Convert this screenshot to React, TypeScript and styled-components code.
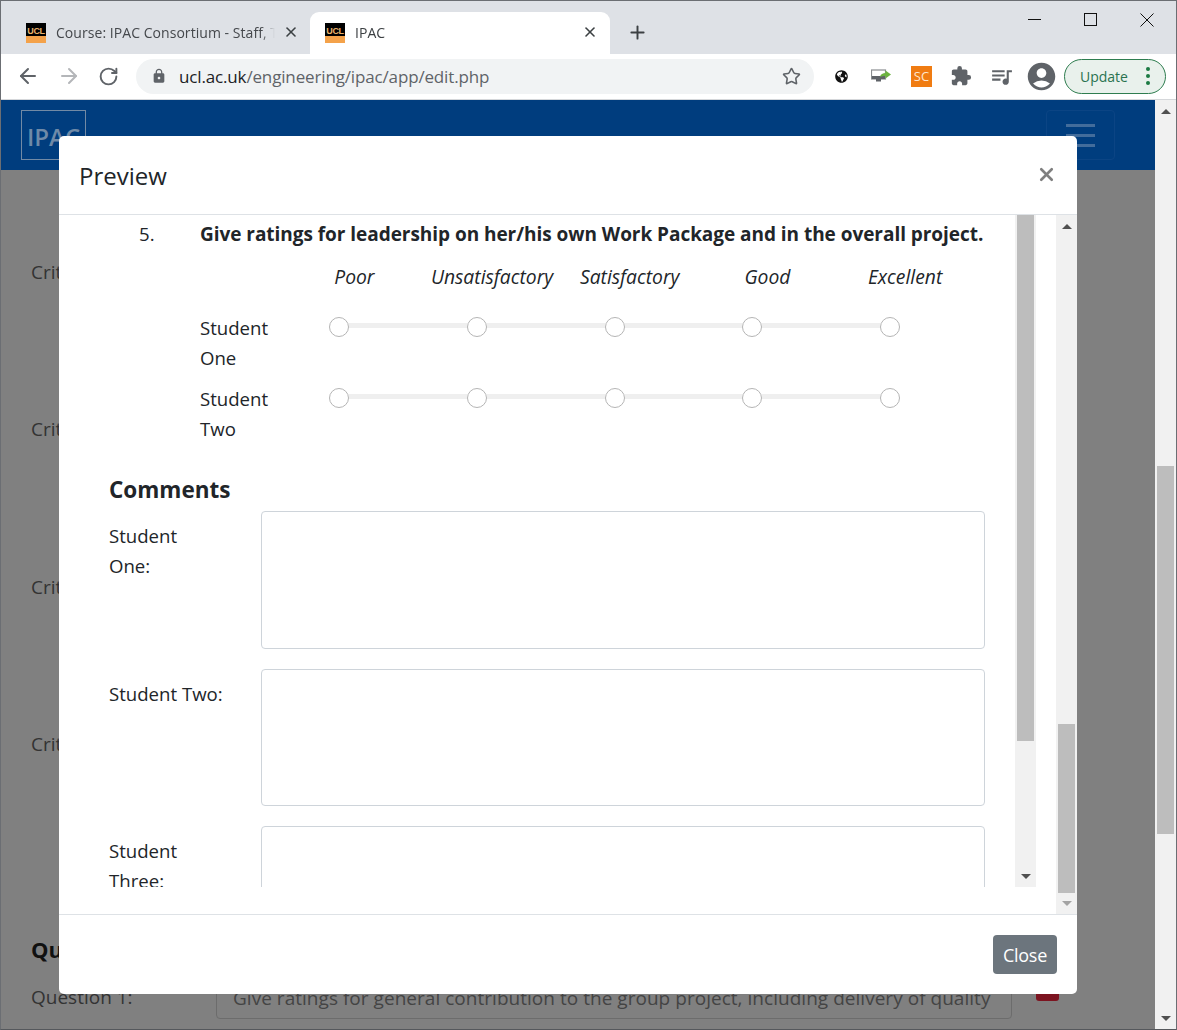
import { Fragment } from "react";
import styled, { createGlobalStyle } from "styled-components";
import { ArrowLeft, ArrowRight, RotateCw, Star, X, Plus } from "lucide-react";
import { FaGlobeAmericas } from "react-icons/fa";
import { MdExtension, MdQueueMusic, MdAccountCircle, MdLock } from "react-icons/md";

const GlobalStyle = createGlobalStyle`
  html, body {
    margin: 0;
    padding: 0;
    overflow: hidden;
    background: #808080;
  }
  * {
    box-sizing: border-box;
  }
`;

const BODY_FONT = `"Open Sans", "Noto Sans", sans-serif`;

const Window = styled.div`
  display: flex;
  flex-direction: column;
  width: 1177px;
  height: 1030px;
  border: 1px solid #6b6e73;
  border-bottom-color: #55585c;
  overflow: hidden;
  font-family: ${BODY_FONT};
  color: #212529;
`;

/* browser chrome */
const TabStrip = styled.div`
  display: flex;
  flex: none;
  height: 53px;
  padding: 11px 0 0 9px;
  background: #dee1e6;
  align-items: stretch;
`;

const Tab = styled.div<{ $active?: boolean }>`
  display: flex;
  align-items: center;
  width: 300px;
  padding: 0 ${props => (props.$active ? "12px" : "11px")} 2px ${props => (props.$active ? "15px" : "16px")};
  border-radius: 9px 9px 0 0;
  background: ${props => (props.$active ? "#ffffff" : "transparent")};
  color: ${props => (props.$active ? "#3c4043" : "#45484c")};
  font-size: 14px;
  letter-spacing: 0.05px;
`;

const Favicon = styled.div`
  display: flex;
  flex: none;
  flex-direction: column;
  width: 20px;
  height: 20px;
  margin: 2px 10px 0 0;
  background: #f4a24a;
`;

const FaviconTop = styled.div`
  height: 13px;
  padding-top: 4px;
  background: #000000;
  color: #e9b36d;
  font: bold 9px/9px "Liberation Sans", sans-serif;
  text-align: center;
  letter-spacing: -0.4px;
`;

const TabTitle = styled.span`
  flex: 1;
  margin-right: 8px;
  white-space: nowrap;
  overflow: hidden;
  mask-image: linear-gradient(to right, #000 calc(100% - 14px), transparent);
`;

const NewTab = styled.div`
  display: flex;
  align-items: center;
  margin-left: 17px;
  padding-bottom: 2px;
  color: #3c4043;
`;

const WindowControls = styled.div`
  display: flex;
  margin-left: auto;
  margin-top: -11px;
  height: 37px;
  padding-right: 22px;
  gap: 43px;
  align-items: center;
`;

const Toolbar = styled.div`
  display: flex;
  flex: none;
  align-items: center;
  height: 46px;
  padding: 0 0 1px 15px;
  background: #ffffff;
  border-bottom: 1px solid #d5d7da;
`;

const NavIcons = styled.div`
  display: flex;
  flex: none;
  align-items: center;
  gap: 17px;
  width: 120px;
`;

const UrlBar = styled.div`
  display: flex;
  flex: none;
  align-items: center;
  width: 678px;
  height: 35px;
  padding: 0 13px 0 15px;
  border-radius: 18px;
  background: #f1f3f4;
  font-size: 17px;
  letter-spacing: -0.15px;
  color: #5f6368;
`;

const UrlHost = styled.span`
  margin-left: 12px;
  color: #202124;
`;

const UrlStar = styled.div`
  display: flex;
  margin-left: auto;
`;

const ExtensionIcons = styled.div`
  display: flex;
  flex: none;
  align-items: center;
  margin-left: 12px;
`;

const ExtSlot = styled.div<{ $w: number }>`
  display: flex;
  flex: none;
  align-items: center;
  justify-content: center;
  width: ${props => props.$w}px;
`;

const ScBadge = styled.div`
  width: 21px;
  height: 21px;
  background: #f07c12;
  color: #ffe7cf;
  font-size: 13px;
  line-height: 21px;
  text-align: center;
`;

const UpdatePill = styled.div`
  display: flex;
  flex: none;
  align-items: center;
  justify-content: space-between;
  width: 102px;
  height: 35px;
  padding: 0 15px 0 15px;
  border: 1.5px solid #2e7d4f;
  border-radius: 18px;
  background: #e9f1ec;
  color: #2a7350;
  font-size: 14px;
`;

const PillDots = styled.div`
  display: flex;
  flex-direction: column;
  gap: 3px;
`;

const PillDot = styled.span`
  width: 4px;
  height: 4px;
  border-radius: 50%;
  background: #1b7a43;
`;

/* page behind the dialog */
const Viewport = styled.div`
  position: relative;
  display: flex;
  flex: 1;
  min-height: 0;
`;

const Page = styled.div`
  flex: 1;
  min-width: 0;
  background: #808080;
  overflow: hidden;
`;

const Navbar = styled.div`
  display: flex;
  align-items: center;
  justify-content: space-between;
  height: 70px;
  padding: 0 40px 0 20px;
  background: #003d7e;
`;

const Brand = styled.div`
  width: 65px;
  height: 50px;
  border: 1px solid #728aa5;
  color: #6f8aa8;
  font-size: 24px;
  font-weight: 600;
  line-height: 52px;
  padding-left: 5px;
`;

const Hamburger = styled.div`
  display: flex;
  flex-direction: column;
  align-items: center;
  justify-content: center;
  gap: 7px;
  width: 69px;
  height: 50px;
  border: 1px solid #0b4484;
  border-radius: 4px;
`;

const HamburgerLine = styled.span`
  width: 29px;
  height: 3px;
  background: #426c9b;
`;

const PageContent = styled.div`
  padding: 87px 0 0 30px;
  font-size: 19px;
  line-height: 30px;
  color: #333333;
`;

const CritRow = styled.div`
  height: 157.3px;
`;

const SectionHead = styled.div`
  margin-top: 45px;
  height: 36px;
  font-size: 22px;
  font-weight: 700;
  line-height: 36px;
  color: #111111;
`;

const QuestionRow = styled.div`
  display: flex;
  align-items: center;
  margin-top: 8px;
`;

const QuestionLabel = styled.div`
  width: 185px;
`;

const QuestionInput = styled.div`
  width: 796px;
  height: 44px;
  padding-left: 16px;
  border: 1px solid #6c6c6c;
  border-radius: 4px;
  white-space: nowrap;
  overflow: hidden;
  line-height: 44px;
  letter-spacing: 0.03px;
  color: #444444;
`;

const RemoveButton = styled.div`
  width: 23px;
  height: 16px;
  margin: 0 0 8px 24px;
  border-radius: 3px;
  background: #7c1420;
`;

/* scrollbars */
const Scrollbar = styled.div`
  display: flex;
  flex: none;
  flex-direction: column;
  align-items: center;
  width: 21px;
  background: #f1f1f1;
`;

const Arrow = styled.div<{ $down?: boolean; $muted?: boolean }>`
  flex: none;
  width: 0;
  height: 0;
  border-left: 5px solid transparent;
  border-right: 5px solid transparent;
  ${props => (props.$down ? "border-top" : "border-bottom")}: 5px solid ${props => (props.$muted ? "#a3a3a3" : "#505050")};
`;

const ArrowBox = styled.div<{ $up?: boolean }>`
  display: flex;
  flex: none;
  align-items: center;
  justify-content: center;
  width: 100%;
  height: 21px;
  padding-top: ${props => (props.$up ? "2px" : "0")};
`;

const Thumb = styled.div<{ $top: number; $height: number }>`
  flex: none;
  width: 17px;
  height: ${props => props.$height}px;
  margin-top: ${props => props.$top}px;
  background: #bdbdbd;
`;

const Spacer = styled.div`
  flex: 1;
`;

/* dialog */
const Modal = styled.div`
  position: absolute;
  top: 36px;
  left: 58px;
  display: flex;
  flex-direction: column;
  width: 1018px;
  height: 858px;
  border-radius: 5px;
  background: #ffffff;
  overflow: hidden;
`;

const ModalHeader = styled.div`
  display: flex;
  flex: none;
  align-items: center;
  justify-content: space-between;
  height: 79px;
  padding: 0 20px;
  border-bottom: 1px solid #dee2e6;
`;

const ModalTitle = styled.div`
  font-size: 24px;
  font-weight: 500;
`;

const CloseCross = styled.div`
  display: flex;
  margin-top: -2px;
  color: #7f7f7f;
`;

const ModalBody = styled.div`
  display: flex;
  flex: 1;
  min-height: 0;
`;

const ModalMain = styled.div`
  flex: 1;
  min-width: 0;
  padding-bottom: 27px;
`;

const InnerFrame = styled.div`
  display: flex;
  width: 977px;
  height: 100%;
`;

const InnerContent = styled.div`
  flex: 1;
  min-width: 0;
  overflow: hidden;
  font-size: 18.6px;
  line-height: 30px;
`;

const QuestionLine = styled.div`
  display: flex;
  height: 30px;
  margin: 4px 0 0 80px;
`;

const QuestionNumber = styled.div`
  width: 61px;
`;

const QuestionText = styled.div`
  font-size: 19px;
  font-weight: 700;
  white-space: nowrap;
  letter-spacing: -0.04px;
`;

const RatingScale = styled.div`
  display: grid;
  grid-template-columns: repeat(5, 137.7px);
  height: 30px;
  margin: 13px 0 21px 226.5px;
`;

const RatingLabel = styled.div`
  font-size: 19.3px;
  font-style: italic;
  text-align: center;
  white-space: nowrap;
`;

const StudentRow = styled.div`
  display: flex;
  height: 60px;
  margin: 0 0 11px 141px;
`;

const StudentName = styled.div`
  width: 129px;
  padding-right: 50px;
`;

const Slider = styled.div`
  display: flex;
  align-items: flex-start;
  width: 571px;
  padding-top: 4px;
`;

const SliderDot = styled.span`
  flex: none;
  width: 20px;
  height: 20px;
  border: 1px solid #b5b5b5;
  border-radius: 50%;
  background: #ffffff;
`;

const SliderRail = styled.span`
  flex: 1;
  height: 5px;
  margin-top: 6px;
  background: #efefef;
`;

const CommentsHead = styled.div`
  margin: 28px 0 3px 50px;
  font-size: 22.5px;
  font-weight: 700;
  line-height: 36px;
`;

const CommentRow = styled.div`
  display: flex;
  margin: 0 0 20px 50px;
`;

const CommentLabel = styled.div`
  flex: none;
  width: 152px;
  padding-top: 10px;
`;

const CommentBox = styled.textarea`
  display: block;
  flex: none;
  width: 724px;
  height: 137.6px;
  border: 1px solid #ced4da;
  border-radius: 4px;
  background: #ffffff;
  resize: none;
  outline: none;
`;

const ModalFooter = styled.div`
  display: flex;
  flex: none;
  align-items: center;
  justify-content: flex-end;
  height: 80px;
  padding: 0 20px 0 0;
  border-top: 1px solid #dee2e6;
`;

const CloseButton = styled.button`
  width: 64px;
  height: 39px;
  padding: 0;
  border: none;
  border-radius: 4px;
  background: #6c757d;
  color: #ffffff;
  font-family: ${BODY_FONT};
  font-size: 18px;
  letter-spacing: -0.3px;
`;

const ratings = ["Poor", "Unsatisfactory", "Satisfactory", "Good", "Excellent"];

function RatingSlider() {
  return (
    <Slider>
      {ratings.map((rating, i) => (
        <Fragment key={rating}>
          {i > 0 && <SliderRail />}
          <SliderDot />
        </Fragment>
      ))}
    </Slider>
  );
}

function MonitorIcon() {
  return (
    <svg width="20" height="14" viewBox="0 0 20 14">
      <rect x="0.5" y="1" width="14" height="9" fill="#ffffff" stroke="#8a8d90" strokeWidth="1.2" />
      <rect x="1" y="7" width="13" height="3" fill="#5f6368" />
      <rect x="5" y="10" width="5" height="2.5" fill="#5f6368" />
      <path d="M9 8c.5-3 3-4 5.5-4V1.5L20 5.5l-5.5 4V7c-2 0-4 0-5.5 1z" fill="#6cb33f" />
    </svg>
  );
}

function App() {
  return (
    <Window>
      <GlobalStyle />
      <TabStrip>
        <Tab>
          <Favicon>
            <FaviconTop>UCL</FaviconTop>
          </Favicon>
          <TabTitle>Course: IPAC Consortium - Staff, T</TabTitle>
          <X size={16} strokeWidth={2.4} color="#3c4043" />
        </Tab>
        <Tab $active>
          <Favicon>
            <FaviconTop>UCL</FaviconTop>
          </Favicon>
          <TabTitle>IPAC</TabTitle>
          <X size={16} strokeWidth={2.4} color="#3c4043" />
        </Tab>
        <NewTab>
          <Plus size={21} strokeWidth={2.2} />
        </NewTab>
        <WindowControls>
          <svg width="13" height="13" viewBox="0 0 13 13">
            <path d="M0 6.5h13" stroke="#111" strokeWidth="1" />
          </svg>
          <svg width="13" height="13" viewBox="0 0 13 13">
            <rect x="0.5" y="0.5" width="12" height="12" fill="none" stroke="#111" strokeWidth="1" />
          </svg>
          <svg width="14" height="14" viewBox="0 0 14 14">
            <path d="M.5.5l13 13M13.5.5l-13 13" stroke="#111" strokeWidth="1" />
          </svg>
        </WindowControls>
      </TabStrip>
      <Toolbar>
        <NavIcons>
          <ArrowLeft size={24} color="#5f6368" strokeWidth={2} />
          <ArrowRight size={24} color="#b4b6b9" strokeWidth={2} />
          <RotateCw size={21} color="#5f6368" strokeWidth={2.2} />
        </NavIcons>
        <UrlBar>
          <MdLock size={16} color="#5f6368" />
          <UrlHost>ucl.ac.uk</UrlHost>/engineering/ipac/app/edit.php
          <UrlStar>
            <Star size={19} color="#5f6368" strokeWidth={2} />
          </UrlStar>
        </UrlBar>
        <ExtensionIcons>
          <ExtSlot $w={31}>
            <FaGlobeAmericas size={13} color="#111" />
          </ExtSlot>
          <ExtSlot $w={48}>
            <MonitorIcon />
          </ExtSlot>
          <ExtSlot $w={33}>
            <ScBadge>SC</ScBadge>
          </ExtSlot>
          <ExtSlot $w={46}>
            <MdExtension size={22} color="#5f6368" />
          </ExtSlot>
          <ExtSlot $w={34}>
            <MdQueueMusic size={25} color="#5f6368" />
          </ExtSlot>
          <ExtSlot $w={46}>
            <MdAccountCircle size={33} color="#5f6368" />
          </ExtSlot>
        </ExtensionIcons>
        <UpdatePill>
          Update
          <PillDots>
            <PillDot />
            <PillDot />
            <PillDot />
          </PillDots>
        </UpdatePill>
      </Toolbar>
      <Viewport>
        <Page>
          <Navbar>
            <Brand>IPAC</Brand>
            <Hamburger>
              <HamburgerLine />
              <HamburgerLine />
              <HamburgerLine />
            </Hamburger>
          </Navbar>
          <PageContent>
            <CritRow>Criteria 1</CritRow>
            <CritRow>Criteria 2</CritRow>
            <CritRow>Criteria 3</CritRow>
            <CritRow>Criteria 4</CritRow>
            <SectionHead>Questions</SectionHead>
            <QuestionRow>
              <QuestionLabel>Question 1:</QuestionLabel>
              <QuestionInput>Give ratings for general contribution to the group project, including delivery of quality</QuestionInput>
              <RemoveButton />
            </QuestionRow>
          </PageContent>
        </Page>
        <Scrollbar>
          <ArrowBox $up>
            <Arrow />
          </ArrowBox>
          <Thumb $top={345} $height={368} />
          <Spacer />
          <ArrowBox>
            <Arrow $down />
          </ArrowBox>
        </Scrollbar>
        <Modal>
          <ModalHeader>
            <ModalTitle>Preview</ModalTitle>
            <CloseCross>
              <X size={21} strokeWidth={3} />
            </CloseCross>
          </ModalHeader>
          <ModalBody>
            <ModalMain>
              <InnerFrame>
                <InnerContent>
                  <QuestionLine>
                    <QuestionNumber>5.</QuestionNumber>
                    <QuestionText>Give ratings for leadership on her/his own Work Package and in the overall project.</QuestionText>
                  </QuestionLine>
                  <RatingScale>
                    {ratings.map(rating => (
                      <RatingLabel key={rating}>{rating}</RatingLabel>
                    ))}
                  </RatingScale>
                  <StudentRow>
                    <StudentName>Student One</StudentName>
                    <RatingSlider />
                  </StudentRow>
                  <StudentRow>
                    <StudentName>Student Two</StudentName>
                    <RatingSlider />
                  </StudentRow>
                  <CommentsHead>Comments</CommentsHead>
                  <CommentRow>
                    <CommentLabel>
                      Student
                      <br />
                      One:
                    </CommentLabel>
                    <CommentBox />
                  </CommentRow>
                  <CommentRow>
                    <CommentLabel>Student Two:</CommentLabel>
                    <CommentBox />
                  </CommentRow>
                  <CommentRow>
                    <CommentLabel>
                      Student
                      <br />
                      Three:
                    </CommentLabel>
                    <CommentBox />
                  </CommentRow>
                </InnerContent>
                <Scrollbar>
                  <Thumb $top={0} $height={526} />
                  <Spacer />
                  <ArrowBox>
                    <Arrow $down />
                  </ArrowBox>
                </Scrollbar>
              </InnerFrame>
            </ModalMain>
            <Scrollbar>
              <ArrowBox $up>
                <Arrow />
              </ArrowBox>
              <Thumb $top={488} $height={169} />
              <Spacer />
              <ArrowBox>
                <Arrow $down $muted />
              </ArrowBox>
            </Scrollbar>
          </ModalBody>
          <ModalFooter>
            <CloseButton>Close</CloseButton>
          </ModalFooter>
        </Modal>
      </Viewport>
    </Window>
  );
}

export default App;
